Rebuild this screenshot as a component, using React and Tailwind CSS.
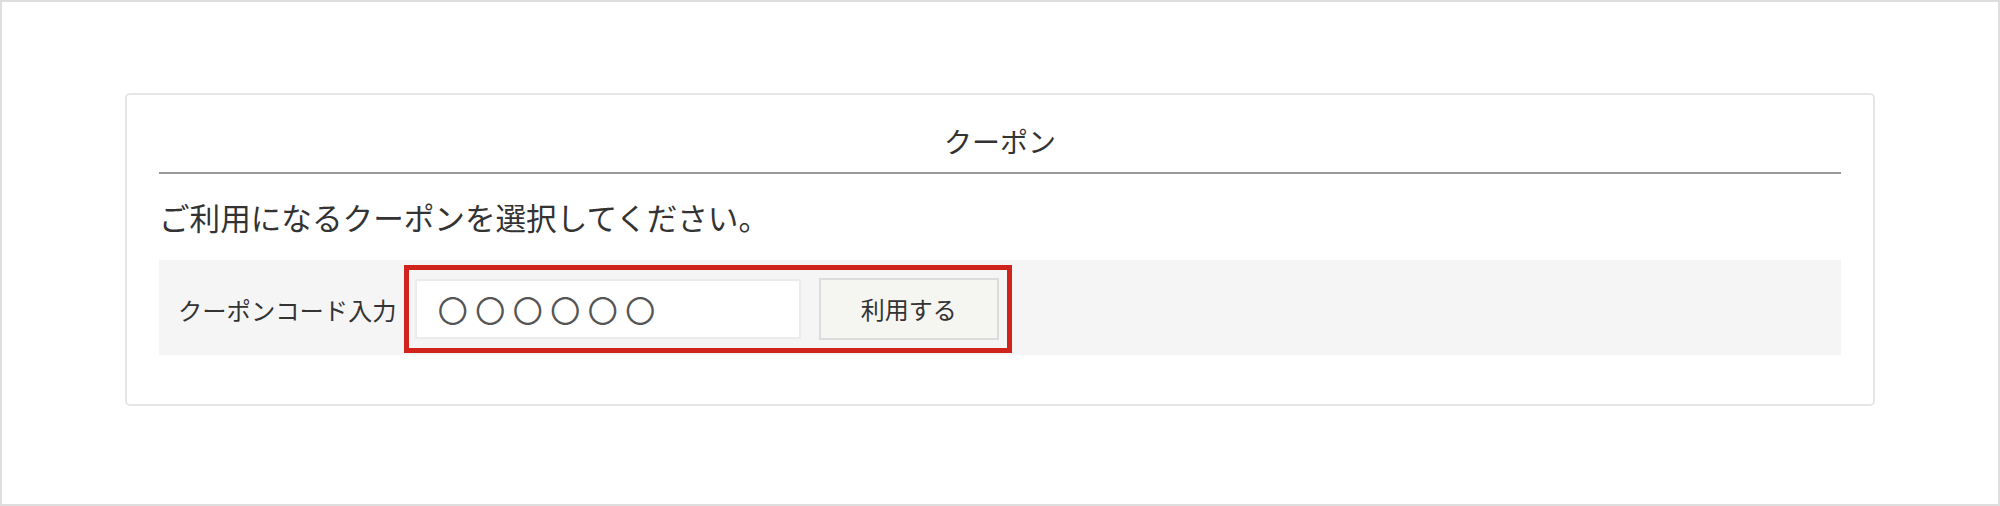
import React from "react";

export default function App() {
  return (
    <div className="w-[2000px] h-[506px] border-2 border-[#dedede] bg-white pl-[123px] pt-[91px] font-['Noto_Sans_CJK_JP','Noto_Sans',sans-serif] text-[#333]">
      <div className="w-[1750px] border-2 border-[#e6e6e6] rounded-[5px] px-[32px] pb-[49px]">
        <div className="pt-[32px] pb-[17px] text-center text-[28px] leading-[28px]">クーポン</div>
        <div className="h-[2px] bg-[#999]" />
        <p className="mt-[28px] text-[30.6px] leading-[30px]">ご利用になるクーポンを選択してください。</p>
        <div className="mt-[28px] h-[95px] bg-[#f5f5f5] flex items-start pl-[19px]">
          <span className="mt-[38px] text-[24.3px] leading-[24px] mr-[7px]">クーポンコード入力</span>
          <div className="mt-[5px] h-[88px] border-[5px] border-[#d0231b] flex items-center pl-[6px] pr-[8px] gap-[18px]">
            <input
              className="w-[386px] h-[60px] bg-white border-2 border-[#ebebeb] pl-[21px] text-[30px] tracking-[7.5px] outline-none placeholder:text-[#555]"
              placeholder="〇〇〇〇〇〇"
            />
            <button className="w-[180px] h-[62px] bg-[#f5f5f2] border-2 border-[#dcdcdc] text-[24px] text-[#333]">
              利用する
            </button>
          </div>
        </div>
      </div>
    </div>
  );
}
